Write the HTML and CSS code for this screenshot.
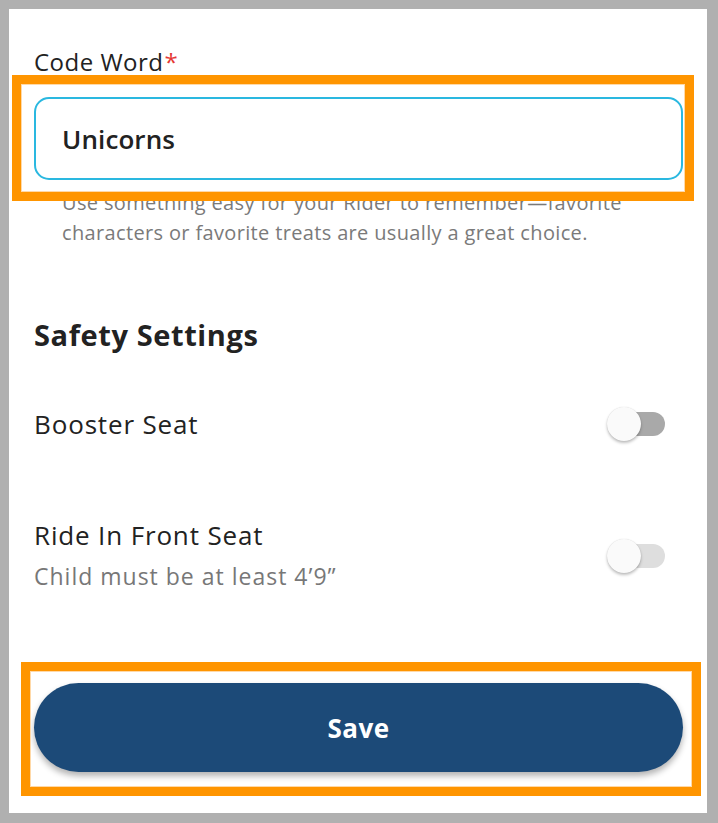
FILE: index.html
```html
<!DOCTYPE html>
<html lang="en">
<head>
<meta charset="utf-8">
<title>Rider settings</title>
<link rel="stylesheet" href="styles.css">
</head>
<body>
<div class="frame">
  <div class="content">
    <label class="field-label">Code Word<span class="req">*</span></label>
    <div class="input">Unicorns</div>
    <p class="helper">Use something easy for your Rider to remember—favorite characters or favorite treats are usually a great choice.</p>

    <h2 class="section-title">Safety Settings</h2>

    <div class="setting setting-booster">
      <div class="setting-text">
        <div class="setting-name">Booster Seat</div>
      </div>
      <div class="toggle toggle-off"><span class="thumb"></span></div>
    </div>

    <div class="setting setting-front">
      <div class="setting-text">
        <div class="setting-name">Ride In Front Seat</div>
        <div class="setting-sub">Child must be at least 4’9”</div>
      </div>
      <div class="toggle toggle-disabled toggle-low"><span class="thumb"></span></div>
    </div>

    <button class="save">Save</button>
  </div>
  <div class="highlight highlight-input"></div>
  <div class="highlight highlight-save"></div>
</div>
</body>
</html>
```

FILE: styles.css
```css
html, body {
  margin: 0;
  padding: 0;
}
body {
  background: #b0b0b0;
  width: 718px;
  height: 823px;
  overflow: hidden;
  font-family: "Open Sans", "Noto Sans", "DejaVu Sans", sans-serif;
}
.frame {
  position: relative;
  margin: 9px 11px 10px 9px;
  height: 804px;
  background: #ffffff;
}
.content {
  display: flex;
  flex-direction: column;
  padding: 39px 24px 0 25px;
}
.field-label {
  font-size: 24px;
  line-height: 28px;
  color: #222222;
  letter-spacing: 0.5px;
}
.req {
  color: #e53935;
  margin-left: 1px;
}
.input {
  margin-top: 21px;
  height: 79px;
  box-sizing: content-box;
  border: 2px solid #2ab8e0;
  border-radius: 15px;
  display: flex;
  align-items: center;
  padding: 0 26px;
  font-size: 26px;
  font-weight: 600;
  color: #222222;
  letter-spacing: 0.1px;
}
.helper {
  margin: 8px 0 0 0;
  padding: 0 40px 0 28px;
  font-size: 20px;
  line-height: 30px;
  color: #7a7a7a;
  letter-spacing: 0.35px;
}
.section-title {
  margin: 70px 0 0 0;
  font-size: 29px;
  line-height: 34px;
  font-weight: 700;
  color: #222222;
  letter-spacing: 0.6px;
}
.setting {
  display: flex;
  align-items: center;
  justify-content: space-between;
}
.setting-booster {
  margin-top: 55px;
}
.setting-front {
  margin-top: 77px;
}
.setting-name {
  font-size: 26px;
  line-height: 34px;
  color: #222222;
  letter-spacing: 0.85px;
}
.setting-sub {
  margin-top: 11px;
  font-size: 23px;
  line-height: 26px;
  color: #777777;
  letter-spacing: 1px;
}
.toggle {
  position: relative;
  width: 54px;
  height: 24px;
  border-radius: 12px;
  margin-right: 18px;
}
.toggle-low {
  margin-top: 4px;
}
.toggle-off {
  background: #a9a9a9;
}
.toggle-disabled {
  background: #dedede;
}
.thumb {
  position: absolute;
  left: -4px;
  top: -5px;
  width: 34px;
  height: 34px;
  border-radius: 50%;
  background: #fafafa;
  box-shadow: 0 2px 3px rgba(0,0,0,0.25), 0 0 1px rgba(0,0,0,0.15);
}
.save {
  margin-top: 94px;
  height: 89px;
  border: none;
  border-radius: 45px;
  background: #1c4a78;
  color: #ffffff;
  font-family: "Open Sans", "Noto Sans", sans-serif;
  font-size: 26px;
  font-weight: 700;
  letter-spacing: 0.5px;
  box-shadow: 0 4px 6px rgba(0,0,0,0.3);
}
.highlight {
  position: absolute;
  border: 9px solid #ff9500;
  box-shadow: inset 0 0 0 1px #ffd9a8;
  pointer-events: none;
}
.highlight-input {
  left: 3px;
  top: 66px;
  width: 664px;
  height: 108px;
}
.highlight-save {
  left: 12px;
  top: 653px;
  width: 662px;
  height: 116px;
}
```
